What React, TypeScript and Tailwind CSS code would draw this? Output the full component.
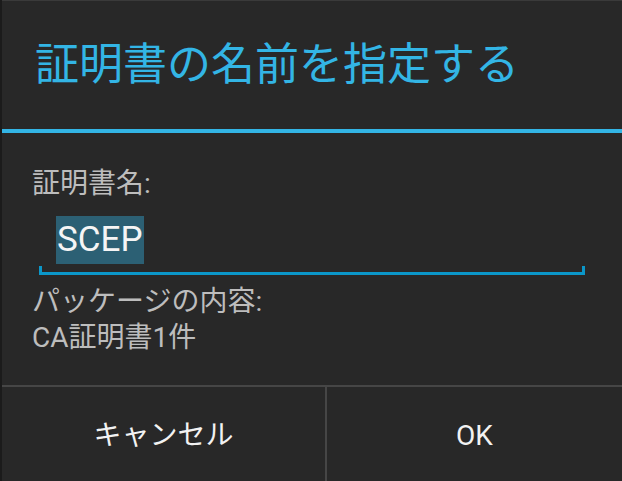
export default function App() {
  const font = { fontFamily: 'Roboto, "Noto Sans CJK JP", sans-serif' };
  return (
    <div className="w-[622px] h-[481px] bg-[#1b1b1b] flex overflow-hidden" style={font}>
      <div className="ml-[2px] flex-1 flex flex-col bg-[#282828] border-t border-[#3a3a3a]">
        <div className="h-[128px] flex items-center pl-[33px]">
          <h1 className="text-[44px] leading-none text-[#33b5e5] whitespace-nowrap">証明書の名前を指定する</h1>
        </div>
        <div className="h-[4px] bg-[#33b5e5]" />

        <div className="flex-1 flex flex-col pl-[30px] pt-[34px]">
          <div className="text-[28px] leading-[34px] text-[#bdbdbd]">証明書名:</div>

          <div className="ml-[7px] w-[546px] mt-[15px] flex flex-col">
            <div className="pl-[17px] flex">
              <span className="h-[48px] px-[1px] bg-[#2c6074] text-[35px] leading-[48px] text-[#f5f5f5]">SCEP</span>
            </div>
            <div className="mt-[2px] h-[9px] border-x-[3px] border-b-[3px] border-[#0b97c9]" />
          </div>

          <div className="mt-[9px] text-[28px] leading-[36px] text-[#bdbdbd]">パッケージの内容:</div>
          <div className="text-[28px] leading-[36px] text-[#bdbdbd]">CA証明書1件</div>
        </div>

        <div className="h-[2px] bg-[#464646]" />
        <div className="h-[94px] flex">
          <button className="w-[323px] pt-[3px] flex items-center justify-center text-[28px] text-[#f2f2f2]">キャンセル</button>
          <div className="w-[2px] bg-[#464646]" />
          <button className="flex-1 pt-[3px] flex items-center justify-center text-[28px] text-[#f2f2f2]">OK</button>
        </div>
      </div>
    </div>
  );
}
